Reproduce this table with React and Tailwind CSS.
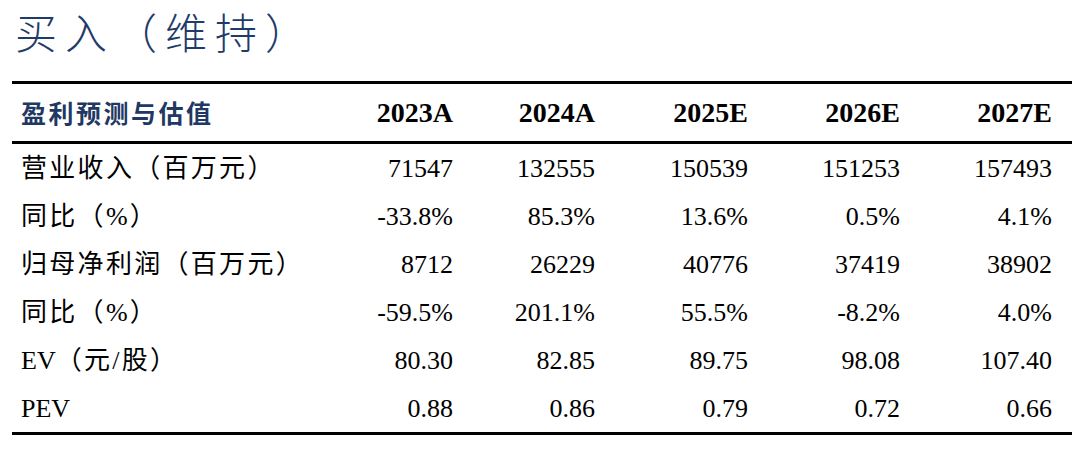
import React from "react";

const years = ["2023A", "2024A", "2025E", "2026E", "2027E"];
const rows = [
  ["", "营业收入（百万元）", ["71547", "132555", "150539", "151253", "157493"]],
  ["", "同比（%）", ["-33.8%", "85.3%", "13.6%", "0.5%", "4.1%"]],
  ["", "归母净利润（百万元）", ["8712", "26229", "40776", "37419", "38902"]],
  ["", "同比（%）", ["-59.5%", "201.1%", "55.5%", "-8.2%", "4.0%"]],
  ["EV", "（元/股）", ["80.30", "82.85", "89.75", "98.08", "107.40"]],
  ["PEV", "", ["0.88", "0.86", "0.79", "0.72", "0.66"]],
];

const grid = "grid grid-cols-[300px_141px_142px_153px_152px_152px_20px]";
const serif = "font-['Liberation_Serif','Noto_Sans_CJK_SC',serif]";

export default function App() {
  return (
    <div className="w-[1080px] h-[450px] bg-white">
      <div className="h-[81px] pl-[15px] flex items-start">
        <div className="font-['Noto_Sans_CJK_SC',sans-serif] font-light text-[42px] leading-[61px] text-[#1f3b6b] tracking-[8px] whitespace-nowrap">
          买入（维持）
        </div>
      </div>
      <div className="ml-[12px] w-[1060px] border-t-[3px] border-b-[3px] border-black">
        <div className={`${grid} h-[60px] items-center border-b-[3px] border-black`}>
          <div className="pl-[9px] font-['Noto_Sans_CJK_SC',sans-serif] font-bold text-[25px] tracking-[2.5px] text-[#1f3864]">
            盈利预测与估值
          </div>
          {years.map((y) => (
            <div key={y} className={`${serif} font-bold text-[28px] text-right text-black`}>
              {y}
            </div>
          ))}
          <div />
        </div>
        {rows.map(([latin, label, vals], i) => (
          <div key={i} className={`${grid} h-[48px] items-center`}>
            <div className={`pl-[9px] ${serif} text-[26px] text-black whitespace-nowrap`}>
              {latin}
              <span className="tracking-[2.3px]">{label}</span>
            </div>
            {vals.map((v, j) => (
              <div key={j} className={`${serif} text-[26px] text-right text-black`}>
                {v}
              </div>
            ))}
            <div />
          </div>
        ))}
      </div>
    </div>
  );
}
